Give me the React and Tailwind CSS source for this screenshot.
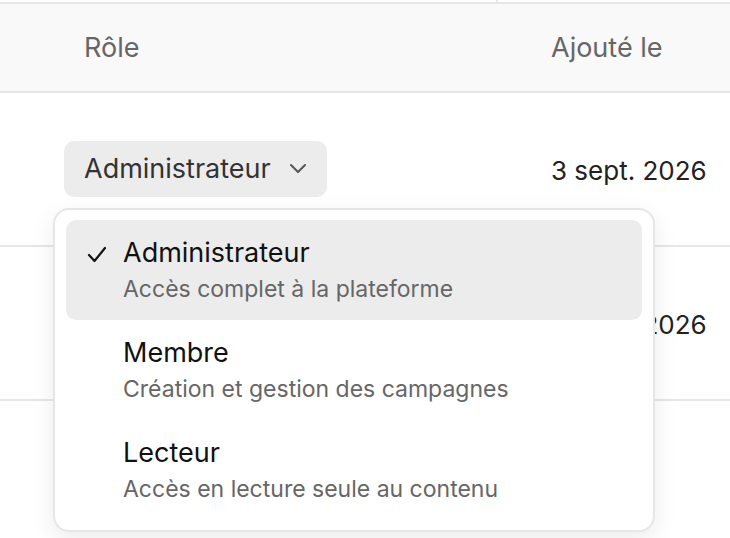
import React, { useState } from "react";

const roles = [
  { key: "admin", label: "Administrateur", desc: "Accès complet à la plateforme" },
  { key: "member", label: "Membre", desc: "Création et gestion des campagnes" },
  { key: "reader", label: "Lecteur", desc: "Accès en lecture seule au contenu" },
];

const rows = [
  { role: "admin", date: "3 sept. 2026" },
  { role: "member", date: "3 sept. 2026" },
];

const Chevron = () => (
  <svg width="18" height="12" viewBox="0 0 18 12" fill="none" className="ml-[18px]">
    <polyline points="2,2 9,9 16,2" stroke="#555" strokeWidth="2" strokeLinecap="round" strokeLinejoin="round" />
  </svg>
);

const Check = () => (
  <svg width="20" height="18" viewBox="0 0 20 18" fill="none">
    <polyline points="2,9 7.5,15 18,2" stroke="#111" strokeWidth="2.2" strokeLinecap="round" strokeLinejoin="round" />
  </svg>
);

const RoleMenu = ({ value }) => (
  <div className="absolute left-[53px] top-[208px] w-[602px] rounded-[16px] border-2 border-[#e6e6e6] bg-white px-[11px] py-[10px] shadow-[0_8px_24px_rgba(0,0,0,0.08)]">
    {roles.map((r) => (
      <div
        key={r.key}
        className={`flex h-[100px] rounded-[10px] pt-[17px] ${value === r.key ? "bg-[#ececec]" : ""}`}
      >
        <div className="flex w-[57px] justify-end pr-[16px] pt-[9px]">
          {value === r.key && <Check />}
        </div>
        <div className="flex flex-col">
          <span className="text-[27px] leading-[32px] text-[#111]">{r.label}</span>
          <span className="mt-[6px] text-[23px] leading-[28px] text-[#666]">{r.desc}</span>
        </div>
      </div>
    ))}
  </div>
);

export default function App() {
  const [open] = useState(true);

  return (
    <div className="relative h-[538px] w-[730px] overflow-hidden bg-white font-['Inter',sans-serif]">
      <div className="flex h-[2px]">
        <div className="w-[496px]" />
        <div className="w-[2px] bg-[#e6e6e6]" />
      </div>
      <div className="flex h-[91px] items-center border-y-2 border-[#e6e6e6] bg-[#f9f9f9] pt-[2px] text-[27px] text-[#666]">
        <div className="w-[551px] pl-[84px]">Rôle</div>
        <div>Ajouté le</div>
      </div>
      {rows.map((row, i) => (
        <div key={i} className="flex h-[154px] items-center border-b-2 border-[#e6e6e6]">
          <div className="w-[551px] pl-[64px]">
            <button className="flex h-[56px] items-center rounded-[10px] bg-[#ececec] pl-[20px] pr-[20px] text-[27px] text-[#333]">
              {roles.find((r) => r.key === row.role).label}
              <Chevron />
            </button>
          </div>
          <div className="pt-[2px] text-[26px] text-[#222]">{row.date}</div>
        </div>
      ))}
      {open && <RoleMenu value="admin" />}
    </div>
  );
}
